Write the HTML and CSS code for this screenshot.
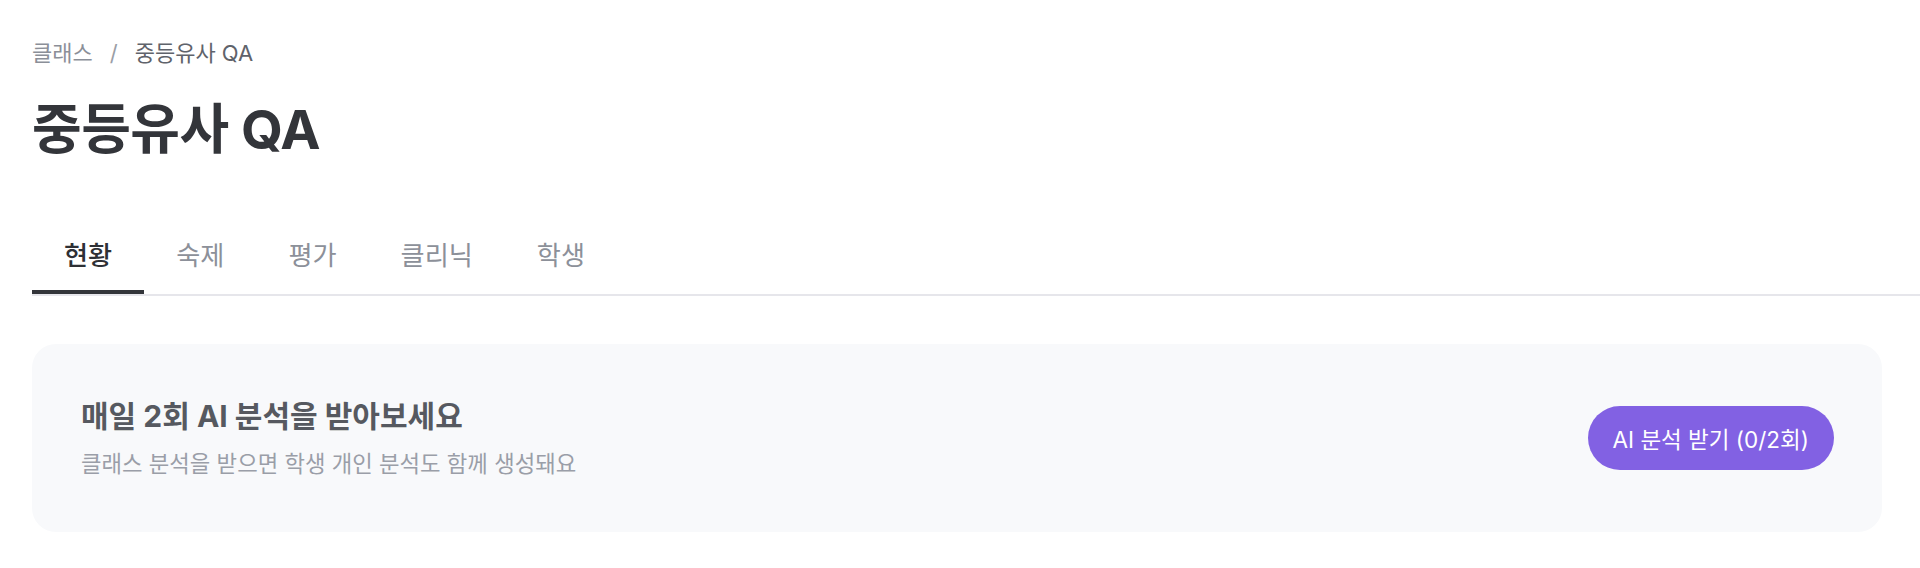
FILE: index.html
```html
<!DOCTYPE html>
<html lang="ko">
<head>
<meta charset="utf-8">
<title>중등유사 QA</title>
<link rel="stylesheet" href="styles.css">
</head>
<body>
<main class="page">
  <nav class="breadcrumb">
    <span class="crumb">클래스</span>
    <span class="sep">/</span>
    <span class="crumb current">중등유사 QA</span>
  </nav>
  <h1 class="title">중등유사 QA</h1>
  <div class="tabs">
    <div class="tab active">현황</div>
    <div class="tab">숙제</div>
    <div class="tab">평가</div>
    <div class="tab">클리닉</div>
    <div class="tab">학생</div>
  </div>
  <section class="content">
    <div class="card">
      <div class="card-text">
        <h2 class="card-title">매일 2회 AI 분석을 받아보세요</h2>
        <p class="card-sub">클래스 분석을 받으면 학생 개인 분석도 함께 생성돼요</p>
      </div>
      <button class="cta">AI 분석 받기 (0/2회)</button>
    </div>
  </section>
</main>
</body>
</html>
```

FILE: styles.css
```css
* { box-sizing: border-box; }
html, body { margin: 0; padding: 0; background: #ffffff; }
body {
  font-family: Inter, "Noto Sans CJK KR", sans-serif;
  color: #33353a;
}
.page {
  padding: 39px 0 0 32px;
}
.breadcrumb {
  display: flex;
  align-items: center;
  gap: 17px;
  font-size: 22px;
  line-height: 28px;
  color: #8b8f98;
}
.breadcrumb .sep { color: #9a9ea6; }
.breadcrumb .current { color: #5f636b; }
.title {
  margin: 32px 0 0;
  font-size: 54px;
  line-height: 61px;
  font-weight: 700;
  color: #33353a;
  letter-spacing: -0.5px;
}
.tabs {
  display: flex;
  margin-top: 80px;
  border-bottom: 2px solid #e6e6eb;
}
.tab {
  padding: 0 32px 18px;
  font-size: 26.2px;
  line-height: 32px;
  color: #8c9099;
  border-bottom: 4px solid transparent;
}
.tab.active {
  color: #2e3035;
  font-weight: 500;
  border-bottom-color: #33353a;
}
.content {
  padding: 48px 38px 0 0;
}
.card {
  display: flex;
  align-items: center;
  justify-content: space-between;
  height: 188px;
  padding: 0 48px 0 49px;
  background: #f8f9fb;
  border-radius: 24px;
}
.card-title {
  margin: 0;
  font-size: 30px;
  line-height: 36px;
  font-weight: 700;
  color: #565960;
}
.card-sub {
  margin: 16px 0 0;
  font-size: 22.3px;
  line-height: 28px;
  color: #9a9ea8;
}
.cta {
  height: 64px;
  padding: 0 25px;
  border: none;
  border-radius: 32px;
  background: #8261e3;
  color: #ffffff;
  font-family: Inter, "Noto Sans CJK KR", sans-serif;
  font-size: 22.5px;
  font-weight: 400;
}
```
